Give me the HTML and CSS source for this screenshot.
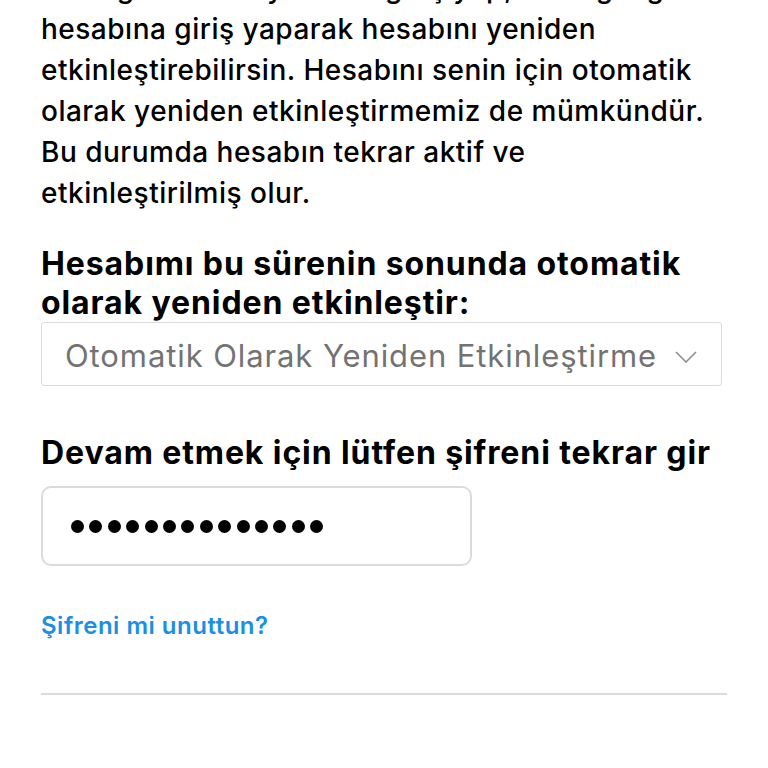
FILE: index.html
```html
<!DOCTYPE html>
<html lang="tr">
<head>
    <meta charset="UTF-8">
    <meta name="viewport" content="width=device-width, initial-scale=1.0">
    <title>Hesabını devre dışı bırak</title>
    <link rel="stylesheet" href="styles.css">
</head>
<body>
    <div class="page">
        <p class="info">
            İstediğin zaman yeniden giriş yap, istediğin gün<br>
            hesabına giriş yaparak hesabını yeniden<br>
            etkinleştirebilirsin. Hesabını senin için otomatik<br>
            olarak yeniden etkinleştirmemiz de mümkündür.<br>
            Bu durumda hesabın tekrar aktif ve<br>
            etkinleştirilmiş olur.
        </p>

        <h2 class="label">Hesabımı bu sürenin sonunda otomatik<br>olarak yeniden etkinleştir:</h2>
        <div class="select">
            <span>Otomatik Olarak Yeniden Etkinleştirme</span>
            <svg class="chevron" width="22" height="12" viewBox="0 0 22 12">
                <path d="M1 1 L11 11 L21 1" fill="none" stroke="#8e8e8e" stroke-width="1.6"/>
            </svg>
        </div>

        <h2 class="label second">Devam etmek için lütfen şifreni tekrar gir</h2>
        <div class="password">
            <span class="dot"></span><span class="dot"></span><span class="dot"></span><span class="dot"></span><span class="dot"></span><span class="dot"></span><span class="dot"></span><span class="dot"></span><span class="dot"></span><span class="dot"></span><span class="dot"></span><span class="dot"></span><span class="dot"></span><span class="dot"></span>
        </div>

        <a class="forgot" href="#">Şifreni mi unuttun?</a>

        <div class="divider"></div>
    </div>
</body>
</html>
```

FILE: styles.css
```css
body {
    margin: 0;
    background: #fff;
    font-family: Inter, "Noto Sans", sans-serif;
    color: #000;
    overflow: hidden;
}
.page {
    width: 686px;
    padding: 0 41px;
}
.info {
    margin: -32px 0 0 0;
    font-size: 28px;
    font-weight: 500;
    line-height: 41px;
    letter-spacing: 0.5px;
    white-space: nowrap;
}
.label {
    margin: 30px 0 0 0;
    font-size: 32px;
    font-weight: 700;
    line-height: 39px;
    letter-spacing: 0.9px;
    white-space: nowrap;
}
.label.second {
    margin-top: 47px;
    letter-spacing: 0.9px;
}
.select {
    box-sizing: border-box;
    width: 681px;
    height: 64px;
    border: 1px solid #dbdbdb;
    border-radius: 3px;
    display: flex;
    align-items: center;
    justify-content: space-between;
    padding: 0 24px 0 23px;
    font-size: 31px;
    letter-spacing: 0.9px;
    color: #737373;
    white-space: nowrap;
}
.select span {
    margin-top: 3px;
}
.chevron {
    margin-top: 6px;
}
.password {
    box-sizing: border-box;
    width: 431px;
    height: 80px;
    margin-top: 14px;
    border: 2px solid #dbdbdb;
    border-radius: 10px;
    display: flex;
    align-items: center;
    gap: 5.4px;
    padding: 0 0 0 28px;
}
.dot {
    width: 13px;
    height: 13px;
    border-radius: 50%;
    background: #000;
}
.forgot {
    display: block;
    margin-top: 46px;
    font-size: 24px;
    font-weight: 600;
    letter-spacing: 0.5px;
    color: #1a8fe3;
    text-decoration: none;
    line-height: 28px;
}
.divider {
    margin-top: 53px;
    height: 2px;
    background: #dbdbdb;
}
```
